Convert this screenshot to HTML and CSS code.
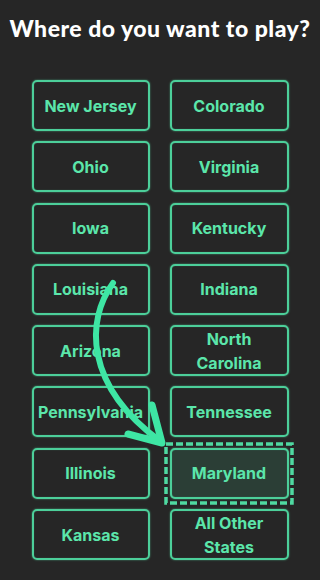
FILE: index.html
```html
<!DOCTYPE html>
<html>
<head>
<meta charset="utf-8">
<link rel="stylesheet" href="styles.css">
</head>
<body>
<div class="page">
  <h1 class="title">Where do you want to play?</h1>
  <div class="grid">
    <div class="state">New Jersey</div>
    <div class="state">Colorado</div>
    <div class="state">Ohio</div>
    <div class="state">Virginia</div>
    <div class="state">Iowa</div>
    <div class="state">Kentucky</div>
    <div class="state">Louisiana</div>
    <div class="state">Indiana</div>
    <div class="state">Arizona</div>
    <div class="state">North<br>Carolina</div>
    <div class="state">Pennsylvania</div>
    <div class="state">Tennessee</div>
    <div class="state">Illinois</div>
    <div class="state selected">Maryland
      <svg class="dash" width="130" height="63" viewBox="0 0 130 63"><rect x="2" y="2" width="126" height="59" fill="none" stroke="#4fd9a1" stroke-width="3.5" stroke-dasharray="7 3"/></svg>
    </div>
    <div class="state">Kansas</div>
    <div class="state">All Other<br>States</div>
  </div>
  <svg class="arrow" width="320" height="580" viewBox="0 0 320 580">
    <path d="M113 283 C 86 320, 84 385, 160 441" fill="none" stroke="#3ee6a4" stroke-width="6" stroke-linecap="round"/>
    <polyline points="128,434 162,443 152,405" fill="none" stroke="#3ee6a4" stroke-width="7" stroke-linecap="round" stroke-linejoin="round"/>
  </svg>
</div>
</body>
</html>
```
FILE: styles.css
```css
html, body {
  margin: 0;
  padding: 0;
  background: #262626;
}
.page {
  position: relative;
  width: 320px;
  height: 580px;
  overflow: hidden;
}
.title {
  margin: 0;
  padding-top: 15px;
  text-align: center;
  color: #ffffff;
  font-family: Lato, "Noto Sans", sans-serif;
  font-weight: 900;
  font-size: 23px;
  line-height: 26px;
  letter-spacing: 0.5px;
  white-space: nowrap;
}
.grid {
  display: grid;
  grid-template-columns: 118px 119px;
  grid-auto-rows: 51px;
  column-gap: 20px;
  row-gap: 10.3px;
  justify-content: center;
  margin-top: 39px;
}
.state {
  position: relative;
  box-sizing: border-box;
  border: 2px solid #4ccf9a;
  border-radius: 5px;
  box-shadow: 0 0 2px rgba(90, 230, 170, 0.6), inset 0 0 1px rgba(90, 230, 170, 0.5);
  display: flex;
  align-items: center;
  justify-content: center;
  text-align: center;
  color: #5be6ab;
  font-family: Inter, Roboto, sans-serif;
  font-weight: 700;
  font-size: 16px;
  line-height: 24px;
}
.selected {
  background: #2b3e36;
}
.dash {
  position: absolute;
  left: -8px;
  top: -8px;
}
.arrow {
  position: absolute;
  left: 0;
  top: 0;
  pointer-events: none;
}
```
